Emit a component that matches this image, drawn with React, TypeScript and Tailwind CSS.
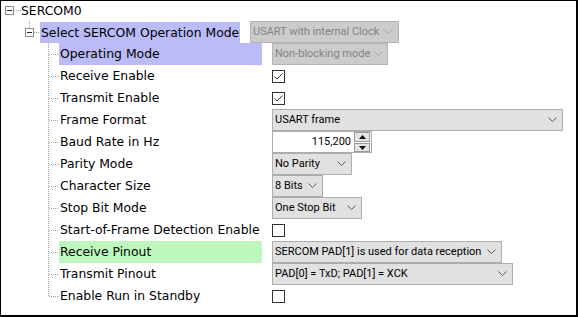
import React from "react";

// SERCOM0 configuration tree (property grid look)

const LABEL = "font-['DejaVu_Sans',sans-serif] text-[12.4px] text-black";
const CTRL = "font-['Roboto','Liberation_Sans',sans-serif] text-[11px]";

function Chevron({ disabled }: { disabled?: boolean }) {
  return (
    <svg width="9" height="6" viewBox="0 0 9 6" className="shrink-0">
      <polyline
        points="0.5,0.5 4.5,4.5 8.5,0.5"
        fill="none"
        stroke={disabled ? "#a8a8a8" : "#5a5a5a"}
        strokeWidth="1"
      />
    </svg>
  );
}

function Combo({
  text,
  className,
  disabled,
}: {
  text: string;
  className: string;
  disabled?: boolean;
}) {
  return (
    <div
      className={`flex h-[22px] shrink-0 items-center justify-between gap-1 border pl-[2px] pr-[5px] ${CTRL} ${
        disabled
          ? "border-[#b4b4b4] bg-[#cccccc] text-[#838383]"
          : "border-[#adadad] bg-[#e1e1e1] text-black"
      } ${className}`}
    >
      <span className="whitespace-nowrap">{text}</span>
      <Chevron disabled={disabled} />
    </div>
  );
}

function Check({ checked }: { checked?: boolean }) {
  return (
    <div className="flex h-[13px] w-[13px] items-center justify-center border border-[#333333] bg-white">
      {checked && (
        <svg width="11" height="11" viewBox="0 0 11 11">
          <polyline
            points="1.5,5.5 4,8 9.5,2.5"
            fill="none"
            stroke="#333333"
            strokeWidth="1"
          />
        </svg>
      )}
    </div>
  );
}

function Spin() {
  return (
    <div className="flex h-[20px] w-[16px] flex-col gap-px">
      <div className="flex h-[10px] items-center justify-center border border-[#9a9a9a] bg-[#e5e5e5]">
        <svg width="7" height="4" viewBox="0 0 7 4">
          <polygon points="0,4 3.5,0 7,4" fill="#111" />
        </svg>
      </div>
      <div className="flex h-[9px] items-center justify-center border border-[#9a9a9a] bg-[#e5e5e5]">
        <svg width="7" height="4" viewBox="0 0 7 4">
          <polygon points="0,0 3.5,4 7,0" fill="#111" />
        </svg>
      </div>
    </div>
  );
}

function Expander() {
  return (
    <>
      <rect x="0.5" y="0.5" width="8" height="8" fill="white" stroke="#8c8c8c" />
      <line x1="2" y1="4.5" x2="7" y2="4.5" stroke="#222" />
    </>
  );
}

function ChildRow({
  label,
  bg,
  last,
  children,
}: {
  label: string;
  bg?: string;
  last?: boolean;
  children?: React.ReactNode;
}) {
  return (
    <div className="flex h-[22px] items-center">
      <svg width="58" height="22" className="shrink-0">
        <line
          x1="47.5"
          y1="0"
          x2="47.5"
          y2={last ? 12 : 22}
          stroke="#a0a0a0"
          strokeDasharray="1 1"
        />
        <line x1="48" y1="11.5" x2="58" y2="11.5" stroke="#a0a0a0" strokeDasharray="1 1" />
      </svg>
      <div className={`flex h-[22px] w-[203px] shrink-0 items-center pl-px pt-px ${bg ?? ""}`}>
        <span className={`${LABEL} whitespace-nowrap`}>{label}</span>
      </div>
      <div className="ml-[10px] flex items-center">{children}</div>
    </div>
  );
}

export default function App() {
  return (
    <div className="h-[317px] w-[578px] overflow-hidden border-l border-t border-b-2 border-r-2 border-black bg-white">
      {/* root node */}
      <div className="flex h-[20px] items-center">
        <svg width="20" height="20" className="shrink-0">
          <g transform="translate(4,5)">
            <Expander />
          </g>
          <line x1="13" y1="9.5" x2="20" y2="9.5" stroke="#a0a0a0" strokeDasharray="1 1" />
        </svg>
        <span className={`${LABEL} pt-px`}>SERCOM0</span>
      </div>

      {/* operation mode node */}
      <div className="flex h-[22px] items-center">
        <svg width="39" height="22" className="shrink-0">
          <line x1="28.5" y1="0" x2="28.5" y2="7" stroke="#a0a0a0" strokeDasharray="1 1" />
          <g transform="translate(24,7)">
            <Expander />
          </g>
          <line x1="33" y1="11.5" x2="39" y2="11.5" stroke="#a0a0a0" strokeDasharray="1 1" />
        </svg>
        <div className="mt-px flex h-[21px] w-[200px] shrink-0 items-center bg-[#bbbbf7] pl-px pt-px">
          <span className={`${LABEL} whitespace-nowrap`}>Select SERCOM Operation Mode</span>
        </div>
        <div className="ml-[10px]">
          <Combo text="USART with internal Clock" className="w-[149px]" disabled />
        </div>
      </div>

      <ChildRow label="Operating Mode" bg="bg-[#bbbbf7]">
        <Combo text="Non-blocking mode" className="w-[116px]" disabled />
      </ChildRow>
      <ChildRow label="Receive Enable">
        <Check checked />
      </ChildRow>
      <ChildRow label="Transmit Enable">
        <Check checked />
      </ChildRow>
      <ChildRow label="Frame Format">
        <Combo text="USART frame" className="w-[291px]" />
      </ChildRow>
      <ChildRow label="Baud Rate in Hz">
        <div className={`flex h-[22px] w-[100px] items-center justify-end gap-[3px] border border-[#adadad] bg-white pr-px ${CTRL}`}>
          <span className="text-black">115,200</span>
          <Spin />
        </div>
      </ChildRow>
      <ChildRow label="Parity Mode">
        <Combo text="No Parity" className="w-[80px]" />
      </ChildRow>
      <ChildRow label="Character Size">
        <Combo text="8 Bits" className="w-[51px]" />
      </ChildRow>
      <ChildRow label="Stop Bit Mode">
        <Combo text="One Stop Bit" className="w-[90px]" />
      </ChildRow>
      <ChildRow label="Start-of-Frame Detection Enable">
        <Check />
      </ChildRow>
      <ChildRow label="Receive Pinout" bg="bg-[#bdf7bd]">
        <Combo text="SERCOM PAD[1] is used for data reception" className="w-[230px]" />
      </ChildRow>
      <ChildRow label="Transmit Pinout">
        <Combo text="PAD[0] = TxD; PAD[1] = XCK" className="w-[241px]" />
      </ChildRow>
      <ChildRow label="Enable Run in Standby" last>
        <Check />
      </ChildRow>
    </div>
  );
}
